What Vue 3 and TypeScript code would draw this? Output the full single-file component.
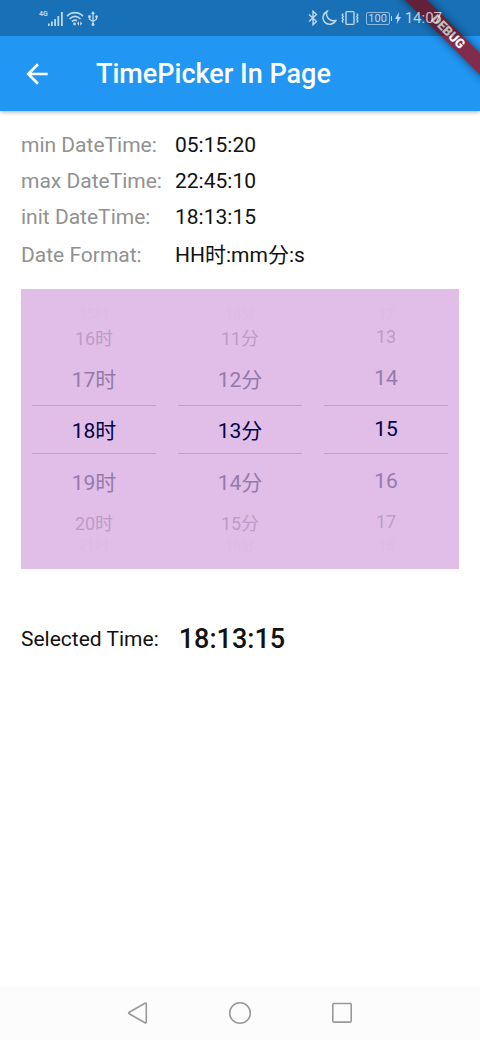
<script setup lang="ts">
import { computed, ref } from 'vue'

interface Column {
  name: string
  unit: string
  min: number
  max: number
}

const columns: Column[] = [
  { name: 'Hour', unit: '时', min: 5, max: 22 },
  { name: 'Minute', unit: '分', min: 0, max: 59 },
  { name: 'Second', unit: '', min: 0, max: 59 },
]

const selected = ref<number[]>([18, 13, 15])
const offsets = [-3, -2, -1, 0, 1, 2, 3]

const details = [
  { label: 'min DateTime:', value: '05:15:20' },
  { label: 'max DateTime:', value: '22:45:10' },
  { label: 'init DateTime:', value: '18:13:15' },
  { label: 'Date Format:', value: 'HH时:mm分:s' },
]

const selectedTime = computed(() =>
  selected.value.map((n) => String(n).padStart(2, '0')).join(':'),
)

function itemText(col: number, offset: number): string {
  const { min, max, unit } = columns[col]
  const n = selected.value[col] + offset
  return n < min || n > max ? '' : `${n}${unit}`
}

function pick(col: number, offset: number): void {
  if (itemText(col, offset)) selected.value[col] += offset
}
</script>

<template>
  <div class="screen">
    <div class="top">
      <div class="status">
        <div class="status-group">
          <span class="network">4G</span>
          <svg width="16" height="15" viewBox="0 0 16 15" fill="currentColor">
            <path d="M0 12.5h1.7V15H0zM3 10.5h1.8V15H3zM6.2 8H8v7H6.2zM9.4 5h1.8v10H9.4zM13 1h1.8v14H13z" />
          </svg>
          <svg class="wifi" width="18" height="15" viewBox="0 0 18 15" fill="none" stroke="currentColor" stroke-width="1.7">
            <path d="M1 5.2C5.5 0.4 12.5 0.4 17 5.2M3.5 8C7 4.6 11 4.6 14.5 8M6 10.6c1.6-1.6 3.6-1.8 5-.8" />
            <circle cx="8.5" cy="13" r="1.4" fill="currentColor" stroke="none" />
            <path d="M13 10.2L11 12.5l2 2.3zM14.2 10.2l2 2.3-2 2.3z" fill="currentColor" stroke="none" />
          </svg>
          <svg class="usb" width="10" height="15" viewBox="0 0 10 15" fill="none" stroke="currentColor" stroke-width="1.3">
            <path d="M5 2v11M1.5 5.5v2.7L5 10.5l3.5-2.3V5.5" />
            <path d="M5 0l2 3H3zM0.3 4.3h2.4v2.4H.3z" fill="currentColor" stroke="none" />
            <circle cx="8.5" cy="5.5" r="1.3" fill="currentColor" stroke="none" />
            <circle cx="5" cy="13.4" r="1.5" fill="currentColor" stroke="none" />
          </svg>
        </div>
        <div class="status-group status-right">
          <svg width="10" height="16" viewBox="0 0 10 16" fill="none" stroke="currentColor" stroke-width="1.4">
            <path d="M1 4.5l7.5 7L5 14.8V1.2l3.5 3.3-7.5 7" />
          </svg>
          <svg width="15" height="16" viewBox="0 0 15 16" fill="none" stroke="currentColor" stroke-width="1.5">
            <path d="M5.2 1.2C3 5.5 6.5 11.8 13.8 10.6C11.5 14.8 5.6 15.6 2.6 12C-.4 8.4 1 3.2 5.2 1.2z" />
          </svg>
          <svg width="18" height="16" viewBox="0 0 18 16" fill="none" stroke="currentColor" stroke-width="1.4">
            <rect x="5" y="1.6" width="8" height="12.8" rx="1" />
            <path d="M2.2 3.6l-1 1.5 1 1.5-1 1.5 1 1.5-1 1.5 1 1.5M15.8 3.6l1 1.5-1 1.5 1 1.5-1 1.5 1 1.5-1 1.5" />
          </svg>
          <span class="battery">100</span>
          <svg width="6" height="12" viewBox="0 0 6 12" fill="currentColor">
            <path d="M4 0L0 7h2.3L1.6 12 6 5H3.5z" />
          </svg>
          <span class="clock">14:07</span>
        </div>
      </div>
      <header class="bar">
        <button class="back" type="button" aria-label="Back">
          <svg width="32" height="32" viewBox="0 0 24 24" fill="#fff">
            <path d="M20 11H7.83l5.59-5.59L12 4l-8 8 8 8 1.41-1.41L7.83 13H20v-2z" />
          </svg>
        </button>
        <h1>TimePicker In Page</h1>
      </header>
      <div class="corner"><span class="ribbon">DEBUG</span></div>
    </div>

    <main>
      <dl class="details">
        <template v-for="d in details" :key="d.label">
          <dt>{{ d.label }}</dt>
          <dd>{{ d.value }}</dd>
        </template>
      </dl>

      <div class="picker">
        <div v-for="(c, ci) in columns" :key="c.name" class="wheel" role="group" :aria-label="c.name">
          <button
            v-for="o in offsets"
            :key="o"
            type="button"
            class="item"
            :class="`d${Math.abs(o)}`"
            @click="pick(ci, o)"
          >{{ itemText(ci, o) }}</button>
        </div>
      </div>

      <p class="result">
        <span>Selected Time:</span>
        <output>{{ selectedTime }}</output>
      </p>
    </main>

    <nav class="system">
      <button type="button" aria-label="Back">
        <svg width="22" height="24" viewBox="0 0 22 24"><path d="M2.2 11.2L18 2.2Q19.3 1.6 19.3 3V21Q19.3 22.4 18 21.7L2.2 12.8Q1 12 2.2 11.2z" /></svg>
      </button>
      <button type="button" aria-label="Home">
        <svg width="24" height="24" viewBox="0 0 24 24"><circle cx="12" cy="12" r="10.3" /></svg>
      </button>
      <button type="button" aria-label="Recent apps">
        <svg width="22" height="24" viewBox="0 0 22 24"><rect x="1.8" y="2.5" width="18.4" height="18.6" rx="1" /></svg>
      </button>
    </nav>
  </div>
</template>

<style>
body {
  margin: 0;
  background: #fff;
}
</style>

<style scoped>
.screen {
  display: flex;
  flex-direction: column;
  min-height: 100vh;
  font-family: Roboto, "Noto Sans CJK SC", sans-serif;
  color: #111;
}

button {
  padding: 0;
  border: 0;
  background: none;
  font: inherit;
  color: inherit;
  cursor: pointer;
}

svg {
  display: block;
  flex: none;
}

.top {
  position: relative;
  background: #2196f3;
  box-shadow: 0 1px 4px rgba(0, 0, 0, 0.35);
}

.status {
  position: relative;
  z-index: 2;
  display: flex;
  justify-content: space-between;
  height: 36px;
  padding: 0 38px 0 39px;
  box-sizing: border-box;
  background: rgba(0, 0, 0, 0.25);
  color: rgba(255, 255, 255, 0.72);
}

.status-group {
  display: flex;
  align-items: center;
}

.network {
  align-self: flex-start;
  margin-top: 10px;
  font-size: 7px;
  line-height: 9px;
  font-weight: 700;
}

.wifi {
  margin-left: 2px;
}

.usb {
  margin-left: 4px;
}

.status-right {
  gap: 4px;
}

.battery {
  position: relative;
  width: 22px;
  margin: 0 1px 0 3px;
  border: 1px solid rgba(255, 255, 255, 0.5);
  border-radius: 2px;
  font-size: 11px;
  line-height: 11px;
  text-align: center;
}

.battery::after {
  content: "";
  position: absolute;
  top: 3px;
  right: -3px;
  width: 1px;
  height: 5px;
  background: currentColor;
}

.clock {
  font-size: 15px;
  line-height: 20px;
}

.bar {
  display: flex;
  align-items: center;
  height: 75px;
  padding: 0 21px;
}

.back {
  width: 32px;
  height: 32px;
}

h1 {
  margin: 0 0 0 43px;
  font-size: 27px;
  line-height: 32px;
  font-weight: 500;
  color: #fff;
}

.corner {
  position: absolute;
  top: 0;
  right: 0;
  z-index: 1;
  width: 84px;
  height: 84px;
  overflow: hidden;
  pointer-events: none;
}

.ribbon {
  position: absolute;
  top: 24px;
  right: -28px;
  width: 120px;
  background: rgba(160, 10, 20, 0.75);
  box-shadow: 0 0 8px rgba(0, 0, 0, 0.5);
  color: #fff;
  font-size: 13px;
  line-height: 16px;
  font-weight: 900;
  text-align: center;
  transform: rotate(45deg);
}

main {
  flex: 1;
  padding: 16px 21px 0;
}

.details {
  display: grid;
  grid-template-columns: 154px 1fr;
  margin: 0;
  font-size: 21px;
  line-height: 36px;
}

dt {
  color: #919191;
}

dd {
  margin: 0;
}

dt:last-of-type,
dd:last-of-type {
  line-height: 40px;
}

.picker {
  display: flex;
  height: 280px;
  margin-top: 14px;
  background: #e1bee7;
}

.wheel {
  display: flex;
  flex: 1;
  flex-direction: column;
  justify-content: center;
  padding: 0 11px;
}

.item {
  font-size: 21px;
  color: #000046;
}

.d0 {
  height: 49px;
  border-top: 1px solid #bfa0c8;
  border-bottom: 1px solid #bfa0c8;
}

.d1 {
  height: 54px;
  color: #9479ad;
}

.d2 {
  height: 28px;
  font-size: 18px;
  color: #bd9bc8;
}

.d3 {
  height: 18px;
  font-size: 14px;
  line-height: 18px;
  color: #debae5;
}

.result {
  display: flex;
  align-items: center;
  gap: 20px;
  margin: 54px 0 0;
  font-size: 21px;
  line-height: 32px;
}

.result output {
  font-size: 27px;
  font-weight: 500;
}

.system {
  display: flex;
  align-items: center;
  justify-content: center;
  gap: 79px;
  height: 54px;
  background: #fcfcfc;
}

.system svg {
  fill: none;
  stroke: #999;
  stroke-width: 1.6;
}
</style>
